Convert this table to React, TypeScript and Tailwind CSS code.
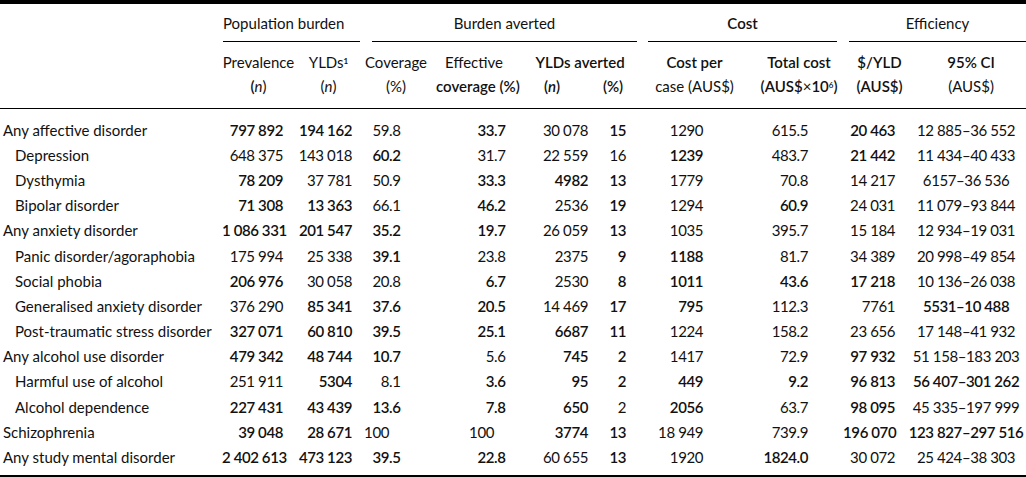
import React from 'react';

type Row = { label: string; sub?: boolean; cells: string[] };

// '*' prefix marks a cell that prints heavier in the source
const ROWS: Row[] = [
  { label: 'Any affective disorder', cells: ['*797 892', '*194 162', '59.8', '*33.7', '30 078', '*15', '1290', '615.5', '*20 463', '12 885–36 552'] },
  { label: 'Depression', sub: true, cells: ['648 375', '143 018', '*60.2', '31.7', '22 559', '16', '*1239', '483.7', '*21 442', '11 434–40 433'] },
  { label: 'Dysthymia', sub: true, cells: ['*78 209', '37 781', '50.9', '*33.3', '*4982', '*13', '1779', '70.8', '14 217', '6157–36 536'] },
  { label: 'Bipolar disorder', sub: true, cells: ['*71 308', '*13 363', '66.1', '*46.2', '2536', '*19', '1294', '*60.9', '24 031', '11 079–93 844'] },
  { label: 'Any anxiety disorder', cells: ['*1 086 331', '*201 547', '*35.2', '*19.7', '26 059', '*13', '1035', '395.7', '15 184', '12 934–19 031'] },
  { label: 'Panic disorder/agoraphobia', sub: true, cells: ['175 994', '25 338', '*39.1', '23.8', '2375', '*9', '*1188', '81.7', '34 389', '20 998–49 854'] },
  { label: 'Social phobia', sub: true, cells: ['*206 976', '30 058', '20.8', '*6.7', '2530', '*8', '*1011', '*43.6', '*17 218', '10 136–26 038'] },
  { label: 'Generalised anxiety disorder', sub: true, cells: ['376 290', '*85 341', '*37.6', '*20.5', '14 469', '*17', '*795', '112.3', '7761', '*5531–10 488'] },
  { label: 'Post-traumatic stress disorder', sub: true, cells: ['*327 071', '*60 810', '*39.5', '*25.1', '*6687', '*11', '1224', '158.2', '23 656', '17 148–41 932'] },
  { label: 'Any alcohol use disorder', cells: ['*479 342', '*48 744', '*10.7', '5.6', '*745', '*2', '1417', '72.9', '*97 932', '51 158–183 203'] },
  { label: 'Harmful use of alcohol', sub: true, cells: ['251 911', '*5304', '8.1', '*3.6', '*95', '*2', '*449', '*9.2', '*96 813', '*56 407–301 262'] },
  { label: 'Alcohol dependence', sub: true, cells: ['*227 431', '*43 439', '*13.6', '*7.8', '*650', '2', '*2056', '63.7', '*98 095', '45 335–197 999'] },
  { label: 'Schizophrenia', cells: ['*39 048', '*28 671', '100', '100', '*3774', '*13', '18 949', '739.9', '*196 070', '*123 827–297 516'] },
  { label: 'Any study mental disorder', cells: ['*2 402 613', '*473 123', '*39.5', '*22.8', '60 655', '*13', '1920', '*1824.0', '30 072', '25 424–38 303'] },
];

// coverage columns line up on the decimal point
function Dec({ v }: { v: string }) {
  const [int, frac] = v.split('.');
  return (
    <>
      <span className="inline-block text-right">{int}</span>
      <span className="inline-block w-[11px] text-left">{frac ? `.${frac}` : ''}</span>
    </>
  );
}

const CELL_CLASS = [
  'text-right pr-[12px]', // prevalence
  'text-right pr-[10px]', // YLDs
  'text-right pr-[30px]', // coverage
  'text-right pr-[7px]', // effective coverage
  'text-right pr-[10px]', // YLDs averted n
  'text-right pr-[14px]', // YLDs averted %
  'text-right pr-[52px]', // cost per case
  'text-right pr-[35px]', // total cost
  'text-right pr-[11px]', // $/YLD
  'text-center', // 95% CI
];

export default function App() {
  return (
    <div className="w-[1026px] bg-white text-[#111] font-['Lato','Open_Sans',sans-serif] text-[15px]">
      <div className="border-t-[4px] border-b-[5px] border-black pb-[5px]">
        <table className="w-full table-fixed border-separate border-spacing-0">
          <colgroup>
            <col className="w-[222px]" />
            <col className="w-[73px]" />
            <col className="w-[67px]" />
            <col className="w-[68px]" />
            <col className="w-[82px]" />
            <col className="w-[86px]" />
            <col className="w-[42px]" />
            <col className="w-[115px]" />
            <col className="w-[88px]" />
            <col className="w-[63px]" />
            <col className="w-[120px]" />
          </colgroup>
          <thead className="whitespace-nowrap">
            <tr>
              <th className="p-0" />
              <th colSpan={2} className="p-0 pl-[1px] pr-[2px] font-normal">
                <div className="pt-[11px] pb-[10px] pr-[16px] leading-[16px] border-b border-black">Population burden</div>
              </th>
              <th colSpan={4} className="p-0 pl-[10px] pr-[3px] font-normal">
                <div className="pt-[11px] pb-[10px] leading-[16px] border-b border-black">Burden averted</div>
              </th>
              <th colSpan={2} className="p-0 pl-[8px] pr-[6px] font-semibold">
                <div className="pt-[11px] pb-[10px] leading-[16px] border-b border-black">Cost</div>
              </th>
              <th colSpan={2} className="p-0 pl-[6px] font-normal">
                <div className="pt-[11px] pb-[10px] leading-[16px] border-b border-black">Efficiency</div>
              </th>
            </tr>
            <tr className="leading-[24px] text-center align-top">
              <th className="border-b border-black pt-[8px] pb-[10px]" />
              <th className="border-b border-black pt-[8px] pb-[10px] font-normal">
                Prevalence
                <br />
                <span className="font-semibold">(</span>
                <i>n</i>)
              </th>
              <th className="border-b border-black pt-[8px] pb-[10px] font-normal">
                YLDs<sup className="text-[8px] font-bold">1</sup>
                <br />
                (<i>n</i>)
              </th>
              <th className="border-b border-black pt-[8px] pb-[10px] font-normal">
                Coverage
                <br />
                (%)
              </th>
              <th className="border-b border-black pt-[8px] pb-[10px] font-semibold pl-[6px]">
                <span className="font-normal">Effective</span>
                <br />
                coverage (%)
              </th>
              <th colSpan={2} className="border-b border-black pt-[8px] pb-[10px] font-semibold p-0">
                <div className="pl-[8px]">YLDs averted</div>
                <div className="flex">
                  <span className="flex-1 pr-[6px]">
                    (<i>n</i>)
                  </span>
                  <span className="w-[42px] pr-[12px]">(%)</span>
                </div>
              </th>
              <th className="border-b border-black pt-[8px] pb-[10px] font-semibold">
                <div className="pr-[6px]">Cost per</div>
                <div className="font-normal pr-[6px]">case (AUS$)</div>
              </th>
              <th className="border-b border-black pt-[8px] pb-[10px] font-semibold">
                Total cost
                <br />
                (AUS$<span className="font-normal">×</span>10<sup className="text-[8px]">6</sup>)
              </th>
              <th className="border-b border-black pt-[8px] pb-[10px] font-semibold pl-[10px]">
                $/YLD
                <br />
                (AUS$)
              </th>
              <th className="border-b border-black pt-[8px] pb-[10px] font-semibold pl-[10px]">
                95% CI
                <br />
                <span className="font-normal">(AUS$)</span>
              </th>
            </tr>
          </thead>
          <tbody>
            <tr className="h-[8px]">
              <td colSpan={11} className="p-0" />
            </tr>
            {ROWS.map((row) => (
              <tr key={row.label} className="h-[25.2px] leading-[20px]">
                <td className={`p-0 whitespace-nowrap ${row.sub ? 'pl-[15px]' : 'pl-[3px]'}`}>{row.label}</td>
                {row.cells.map((raw, i) => {
                  const bold = raw.startsWith('*');
                  const v = bold ? raw.slice(1) : raw;
                  return (
                    <td
                      key={i}
                      className={`p-0 whitespace-nowrap tracking-[-0.4px] ${CELL_CLASS[i]} ${bold ? 'font-semibold' : 'font-normal'}`}
                    >
                      {i === 2 || i === 3 ? <Dec v={v} /> : v}
                    </td>
                  );
                })}
              </tr>
            ))}
          </tbody>
        </table>
      </div>
    </div>
  );
}
